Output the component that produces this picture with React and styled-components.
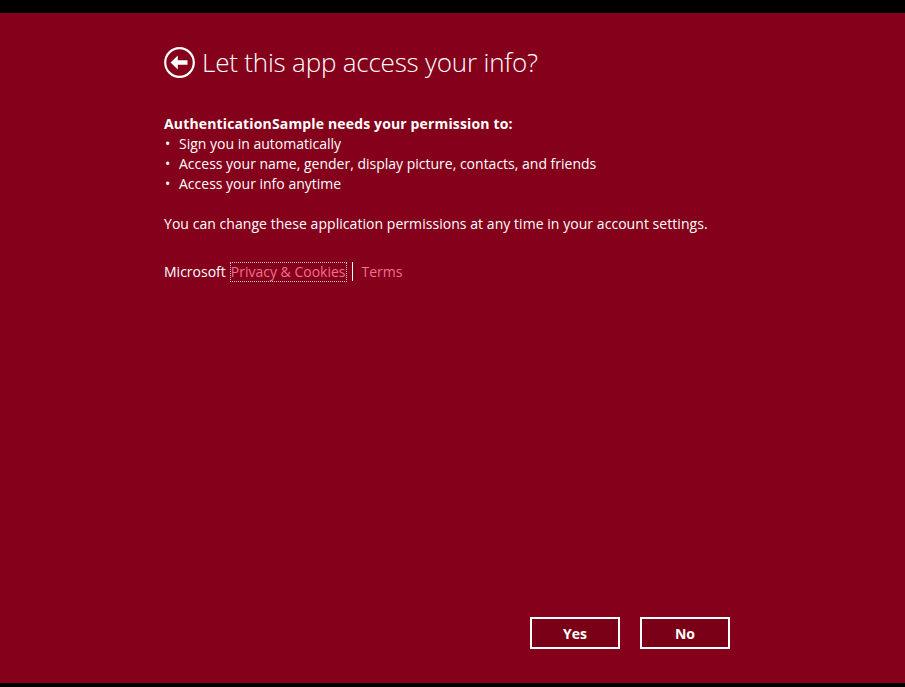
import React from 'react';
import styled, { createGlobalStyle } from 'styled-components';

const Global = createGlobalStyle`
  html, body {
    margin: 0;
    background: #000;
  }
`;

const Screen = styled.div`
  width: 905px;
  height: 687px;
  padding-top: 13px;
  box-sizing: border-box;
  background: #000;
`;

const Panel = styled.div`
  height: 670px;
  background: #85001b;
  color: #fff;
  font-family: "Open Sans", "Noto Sans", sans-serif;
  display: flex;
  flex-direction: column;
  padding: 32px 175px 34px 164px;
  box-sizing: border-box;
`;

const Header = styled.div`
  display: flex;
  align-items: center;
  gap: 7px;
  height: 34px;
`;

const BackIcon = styled.svg`
  width: 31px;
  height: 31px;
  flex: none;
`;

const Title = styled.h1`
  margin: 0;
  font-size: 26px;
  font-weight: 300;
  letter-spacing: -0.2px;
`;

const Body = styled.div`
  margin-top: 35px;
  font-size: 14px;
  line-height: 20px;
`;

const Lead = styled.div`
  font-weight: 700;
  letter-spacing: 0.15px;
`;

const List = styled.ul`
  list-style: none;
  margin: 0;
  padding: 0;
`;

const Item = styled.li`
  display: flex;
  &::before {
    content: '•';
    width: 15px;
    padding-left: 1px;
    box-sizing: border-box;
  }
`;

const Note = styled.p`
  margin: 20px 0 0;
  letter-spacing: 0.05px;
`;

const Footer = styled.div`
  margin-top: 28px;
  display: flex;
  align-items: center;
  font-size: 14px;
  line-height: 17px;
`;

const Link = styled.a`
  color: #f0708f;
  text-decoration: none;
  padding: 0 0 1px;
  margin-left: ${p => p.$gap || 0}px;
  outline: ${p => (p.$focused ? '1px dotted #c8c8c8' : 'none')};
`;

const Divider = styled.span`
  width: 1px;
  height: 19px;
  background: #fff;
  margin-left: 6px;
`;

const Actions = styled.div`
  margin-top: auto;
  display: flex;
  justify-content: flex-end;
  gap: 20px;
`;

const Button = styled.button`
  width: 90px;
  height: 32px;
  box-sizing: border-box;
  border: 2px solid #fff;
  background: #7a0017;
  color: #fff;
  font-family: "Open Sans", "Noto Sans", sans-serif;
  font-weight: 700;
  font-size: 14px;
  padding: 0;
`;

export default function App() {
  return (
    <Screen>
      <Global />
      <Panel>
        <Header>
          <BackIcon viewBox="0 0 31 31">
            <circle cx="15.5" cy="15.5" r="14.3" fill="none" stroke="#fff" strokeWidth="2.2" />
            <path d="M6.5 15.5 L13.8 8.5 L13.8 13.3 L23.5 13.3 L23.5 17.7 L13.8 17.7 L13.8 22.5 Z" fill="#fff" />
          </BackIcon>
          <Title>Let this app access your info?</Title>
        </Header>
        <Body>
          <Lead>AuthenticationSample needs your permission to:</Lead>
          <List>
            <Item>Sign you in automatically</Item>
            <Item>Access your name, gender, display picture, contacts, and friends</Item>
            <Item>Access your info anytime</Item>
          </List>
          <Note>You can change these application permissions at any time in your account settings.</Note>
        </Body>
        <Footer>
          <span>Microsoft</span>
          <Link href="#" $gap={5} $focused>Privacy &amp; Cookies</Link>
          <Divider />
          <Link href="#" $gap={9}>Terms</Link>
        </Footer>
        <Actions>
          <Button>Yes</Button>
          <Button>No</Button>
        </Actions>
      </Panel>
    </Screen>
  );
}
